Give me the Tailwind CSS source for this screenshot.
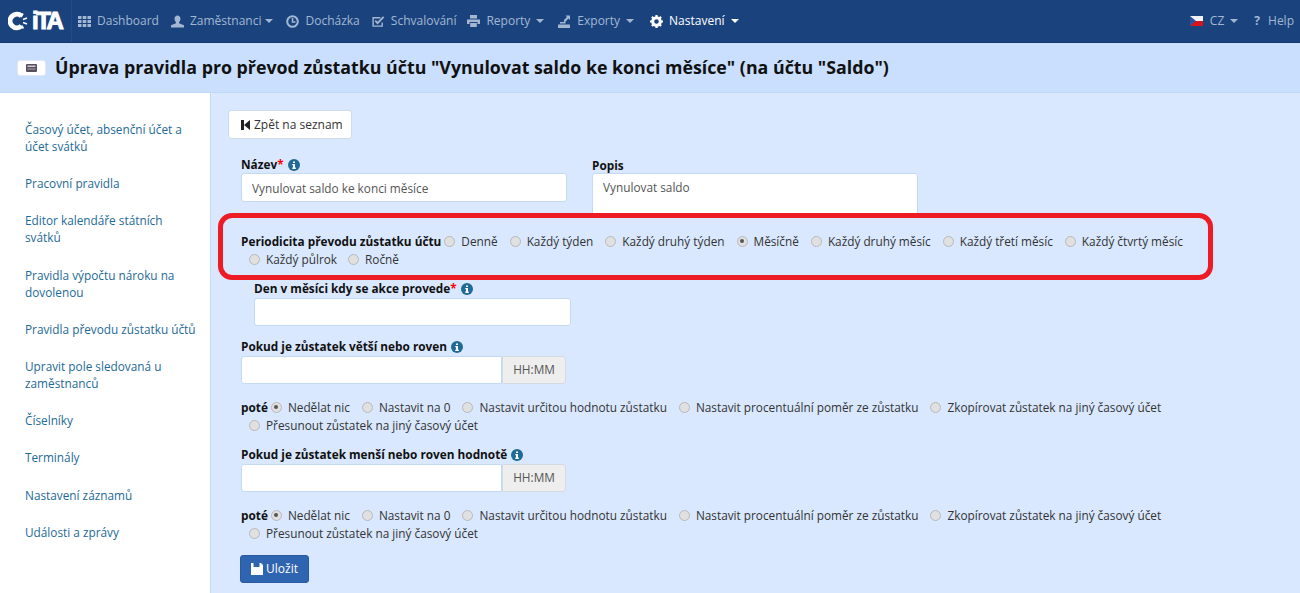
<!DOCTYPE html>
<html lang="cs">
<head>
    <meta charset="UTF-8">
    <title>Úprava pravidla</title>
    <script src="https://cdn.jsdelivr.net/npm/@tailwindcss/browser@4"></script>
</head>
<body class="h-[593px] overflow-hidden bg-[#d9e8fe] font-['Open_Sans',sans-serif] text-[11.800px] text-[#333]">
    <!-- Top nav -->
    <nav class="h-[43px] bg-[#1a437e] border-b border-[#15396c] flex items-center text-[12px] text-[#a3b7d2]">
        <div class="w-[72px] h-full border-r border-[#234d8a] flex items-center pl-[8px] shrink-0">
            <svg width="20" height="20" viewBox="0 0 20 20" class="mr-[4px]">
                <path d="M13.500 5A6.800 6.800 0 1 0 13.500 15" fill="none" stroke="#fff" stroke-width="5"/>
                <path d="M10 5V1M13 6l2-3.500M15 8.500l4-1.500M15 11.500l4 1.500M13.500 14.500l2 3" stroke="#fff" stroke-width="1.600"/>
            </svg>
            <span class="font-['Liberation_Sans',sans-serif] font-bold text-white text-[24px] leading-none tracking-[-2.500px] [-webkit-text-stroke:1px_white]">iTA</span>
        </div>
        <div class="flex items-center pl-[6px] gap-[12px]">
            <a class="flex items-center gap-[6px]">
                <svg width="13" height="11" viewBox="0 0 13 11" fill="currentColor"><path d="M0 0h3.500v3H0zM4.700 0h3.600v3H4.700zM9.500 0H13v3H9.500zM0 4h3.500v3H0zM4.700 4h3.600v3H4.700zM9.500 4H13v3H9.500zM0 8h3.500v3H0zM4.700 8h3.600v3H4.700zM9.500 8H13v3H9.500z"/></svg>
                Dashboard
            </a>
            <a class="flex items-center gap-[6px]">
                <svg width="13" height="13" viewBox="0 0 14 13" fill="currentColor"><path d="M7 0c2 0 3.200 1.500 3.200 3.500 0 1.500-.7 2.800-1.500 3.500v1.300L14 10.500V13H0v-2.500l5.300-2.200V7C4.500 6.300 3.800 5 3.800 3.500 3.800 1.500 5 0 7 0z"/></svg>
                <span>Zaměstnanci</span>
                <span class="w-0 h-0 border-x-[4px] border-x-transparent border-t-[4px] border-t-current -ml-[2px]"></span>
            </a>
            <a class="flex items-center gap-[6px] ml-[1px]">
                <svg width="13" height="13" viewBox="0 0 13 13" fill="none" stroke="currentColor"><circle cx="6.500" cy="6.500" r="5.300" stroke-width="2"/><path d="M6.500 3v4H9.500" stroke-width="1.500"/></svg>
                Docházka
            </a>
            <a class="flex items-center gap-[6px]">
                <svg width="13" height="13" viewBox="0 0 14 13" fill="none" stroke="currentColor"><path d="M11 7.500V11.500H1.200V2.500H9" stroke-width="1.500"/><path d="M3.500 5.500l2.500 2.800L12.500 1.500" stroke-width="2"/></svg>
                Schvalování
            </a>
            <a class="flex items-center gap-[6px] -ml-[1px]">
                <svg width="13" height="12" viewBox="0 0 13 12" fill="currentColor"><path d="M3 0h7v3.500H3zM0 4.500h13V9h-2.500V7h-8v2H0zM3.200 8h6.600v4H3.200z"/></svg>
                <span>Reporty</span>
                <span class="w-0 h-0 border-x-[4px] border-x-transparent border-t-[4px] border-t-current"></span>
            </a>
            <a class="flex items-center gap-[6px] ml-[1px]">
                <svg width="14" height="13" viewBox="0 0 14 13" fill="currentColor"><path d="M1 9.500h12V13H1zM3 7h4V5L10 2 8.500.5H13v4.500L11.500 3.500 8.500 6.500V8.500H3z"/></svg>
                <span>Exporty</span>
                <span class="w-0 h-0 border-x-[4px] border-x-transparent border-t-[4px] border-t-current"></span>
            </a>
            <a class="flex items-center gap-[6px] ml-[4px] text-white">
                <svg width="13" height="13" viewBox="0 0 13 13"><circle cx="6.500" cy="6.500" r="3.800" fill="none" stroke="currentColor" stroke-width="3"/><path d="M6.500 0v13M0 6.500h13M1.900 1.900l9.200 9.200M11.100 1.900l-9.200 9.200" stroke="currentColor" stroke-width="2.200" stroke-dasharray="2.400 8.200 2.400"/></svg>
                <span>Nastavení</span>
                <span class="w-0 h-0 border-x-[4px] border-x-transparent border-t-[4px] border-t-current"></span>
            </a>
        </div>
        <div class="ml-auto flex items-center pr-[6px]">
            <svg width="13" height="10" viewBox="0 0 13 10"><rect width="13" height="5" fill="#f2f2f5"/><rect y="5" width="13" height="5" fill="#d7141a"/><path d="M0 0l6 5-6 5z" fill="#2d4f9e"/></svg>
            <span class="ml-[7px]">CZ</span>
            <span class="ml-[6px] w-0 h-0 border-x-[4px] border-x-transparent border-t-[4px] border-t-current"></span>
            <span class="ml-[16px] font-bold">?</span>
            <span class="ml-[8px]">Help</span>
        </div>
    </nav>

    <!-- Title bar -->
    <header class="h-[50px] bg-[#c9dffd] flex items-center pl-[17px] border-b border-[#c1d8f8]">
        <div class="w-[29px] h-[16px] bg-white rounded-[3px] border border-[#e4e9f2] flex items-center justify-center">
            <svg width="11" height="8" viewBox="0 0 11 8"><rect width="11" height="8" rx="1" fill="#5a4f5c"/><rect x="1.500" y="1.500" width="8" height="1.500" fill="#cfcfd6"/><rect x="1.500" y="4.500" width="8" height="1" fill="#a9a5ad"/></svg>
        </div>
        <h1 class="ml-[9px] text-[17.800px] font-bold text-[#111]">Úprava pravidla pro převod zůstatku účtu "Vynulovat saldo ke konci měsíce" (na účtu "Saldo")</h1>
    </header>

    <div class="flex h-[501px]">
        <!-- Sidebar -->
        <aside class="w-[211px] shrink-0 bg-white border-r border-[#c4d9f6] pl-[25px] pr-[13px] pt-[28px] flex flex-col gap-[20.200px] text-[#1d6a96] leading-[17px]">
            <a>Časový účet, absenční účet a účet svátků</a>
            <a>Pracovní pravidla</a>
            <a>Editor kalendáře státních svátků</a>
            <a>Pravidla výpočtu nároku na dovolenou</a>
            <a>Pravidla převodu zůstatku účtů</a>
            <a>Upravit pole sledovaná u zaměstnanců</a>
            <a>Číselníky</a>
            <a>Terminály</a>
            <a>Nastavení záznamů</a>
            <a>Události a zprávy</a>
        </aside>

        <!-- Form -->
        <main class="relative flex-1 pl-[17px] pt-[17px]">
            <button class="h-[29px] w-[124px] bg-white border border-[#cfdbeb] rounded-[3px] flex items-center pl-[12px] gap-[4px] text-[12px] text-[#333]">
                <svg width="9" height="10" viewBox="0 0 9 10" fill="#222"><path d="M0 0h3v10H0zM9 0v10L3 5z"/></svg>
                Zpět na seznam
            </button>

            <div class="ml-[13px] mt-[18px] flex gap-[25px] h-[58px]">
                <div>
                    <label class="flex items-center h-[16px] font-bold text-[#111]">Název<span class="text-[#f00]">*</span>
                        <svg class="ml-[4px]" width="12" height="12" viewBox="0 0 12 12"><circle cx="6" cy="6" r="6" fill="#1f6a96"/><path d="M5 2.500h2v1.500H5zM4.300 5h2.700v3.500h.8V10H4.300V8.500H5V6.300h-.7z" fill="#fff"/></svg>
                    </label>
                    <input value="Vynulovat saldo ke konci měsíce" class="block w-[326px] h-[29px] bg-white border border-[#c4d9f6] rounded-[3px] px-[10px] text-[#555]">
                </div>
                <div>
                    <label class="block h-[16px] font-bold text-[#111]">Popis</label>
                    <div class="w-[326px] h-[42px] bg-white border border-[#c4d9f6] rounded-[3px] px-[10px] py-[5px] text-[#555]">Vynulovat saldo</div>
                </div>
            </div>

            <!-- Periodicita -->
            <div class="ml-[13px] mt-[17px] flex flex-wrap items-center leading-[18px] pr-[20px]">
                <span class="font-bold text-[#111] mr-[-5px]">Periodicita převodu zůstatku účtu</span>
                <label class="flex items-center gap-[6px] ml-[8px] mr-[4px]"><span class="w-[11px] h-[11px] rounded-full bg-[#e0e0e0] border border-[#b9b9b9]"></span>Denně</label>
                <label class="flex items-center gap-[6px] ml-[8px] mr-[4px]"><span class="w-[11px] h-[11px] rounded-full bg-[#e0e0e0] border border-[#b9b9b9]"></span>Každý týden</label>
                <label class="flex items-center gap-[6px] ml-[8px] mr-[4px]"><span class="w-[11px] h-[11px] rounded-full bg-[#e0e0e0] border border-[#b9b9b9]"></span>Každý druhý týden</label>
                <label class="flex items-center gap-[6px] ml-[8px] mr-[4px]"><span class="w-[11px] h-[11px] rounded-full bg-[#e0e0e0] border border-[#b9b9b9] flex items-center justify-center"><span class="w-[4px] h-[4px] rounded-full bg-[#555]"></span></span>Měsíčně</label>
                <label class="flex items-center gap-[6px] ml-[8px] mr-[4px]"><span class="w-[11px] h-[11px] rounded-full bg-[#e0e0e0] border border-[#b9b9b9]"></span>Každý druhý měsíc</label>
                <label class="flex items-center gap-[6px] ml-[8px] mr-[4px]"><span class="w-[11px] h-[11px] rounded-full bg-[#e0e0e0] border border-[#b9b9b9]"></span>Každý třetí měsíc</label>
                <label class="flex items-center gap-[6px] ml-[8px] mr-[4px]"><span class="w-[11px] h-[11px] rounded-full bg-[#e0e0e0] border border-[#b9b9b9]"></span>Každý čtvrtý měsíc</label>
                <label class="flex items-center gap-[6px] ml-[8px] mr-[4px] basis-full"><span class="w-[11px] h-[11px] rounded-full bg-[#e0e0e0] border border-[#b9b9b9]"></span>Každý půlrok<span class="ml-[5px] w-[11px] h-[11px] rounded-full bg-[#e0e0e0] border border-[#b9b9b9]"></span>Ročně</label>
            </div>

            <!-- Den -->
            <div class="ml-[26px] mt-[12px]">
                <label class="flex items-center h-[17px] font-bold text-[#111]">Den v měsíci kdy se akce provede<span class="text-[#f00]">*</span>
                    <svg class="ml-[4px]" width="12" height="12" viewBox="0 0 12 12"><circle cx="6" cy="6" r="6" fill="#1f6a96"/><path d="M5 2.500h2v1.500H5zM4.300 5h2.700v3.500h.8V10H4.300V8.500H5V6.300h-.7z" fill="#fff"/></svg>
                </label>
                <input class="block mt-[1px] w-[317px] h-[28px] bg-white border border-[#c4d9f6] rounded-[3px]">
            </div>

            <!-- Větší -->
            <div class="ml-[13px] mt-[12px]">
                <label class="flex items-center h-[17px] font-bold text-[#111]">Pokud je zůstatek větší nebo roven
                    <svg class="ml-[4px]" width="12" height="12" viewBox="0 0 12 12"><circle cx="6" cy="6" r="6" fill="#1f6a96"/><path d="M5 2.500h2v1.500H5zM4.300 5h2.700v3.500h.8V10H4.300V8.500H5V6.300h-.7z" fill="#fff"/></svg>
                </label>
                <div class="flex mt-[1px]">
                    <input class="w-[261px] h-[28px] bg-white border border-[#c4d9f6] rounded-l-[3px]">
                    <span class="w-[64px] h-[28px] bg-[#eee] border border-[#d5dbe3] rounded-r-[3px] flex items-center justify-center text-[#555]">HH:MM</span>
                </div>
            </div>
            <div class="ml-[13px] mt-[14px] flex flex-wrap items-center leading-[18px] pr-[20px]">
                <span class="font-bold text-[#111] mr-[-5px]">poté</span>
                <label class="flex items-center gap-[6px] ml-[8px] mr-[4px]"><span class="w-[11px] h-[11px] rounded-full bg-[#e0e0e0] border border-[#b9b9b9] flex items-center justify-center"><span class="w-[4px] h-[4px] rounded-full bg-[#555]"></span></span>Nedělat nic</label>
                <label class="flex items-center gap-[6px] ml-[8px] mr-[4px]"><span class="w-[11px] h-[11px] rounded-full bg-[#e0e0e0] border border-[#b9b9b9]"></span>Nastavit na 0</label>
                <label class="flex items-center gap-[6px] ml-[8px] mr-[4px]"><span class="w-[11px] h-[11px] rounded-full bg-[#e0e0e0] border border-[#b9b9b9]"></span>Nastavit určitou hodnotu zůstatku</label>
                <label class="flex items-center gap-[6px] ml-[8px] mr-[4px]"><span class="w-[11px] h-[11px] rounded-full bg-[#e0e0e0] border border-[#b9b9b9]"></span>Nastavit procentuální poměr ze zůstatku</label>
                <label class="flex items-center gap-[6px] ml-[8px] mr-[4px]"><span class="w-[11px] h-[11px] rounded-full bg-[#e0e0e0] border border-[#b9b9b9]"></span>Zkopírovat zůstatek na jiný časový účet</label>
                <label class="flex items-center gap-[6px] ml-[8px] mr-[4px] basis-full"><span class="w-[11px] h-[11px] rounded-full bg-[#e0e0e0] border border-[#b9b9b9]"></span>Přesunout zůstatek na jiný časový účet</label>
            </div>

            <!-- Menší -->
            <div class="ml-[13px] mt-[12px]">
                <label class="flex items-center h-[17px] font-bold text-[#111]">Pokud je zůstatek menší nebo roven hodnotě
                    <svg class="ml-[4px]" width="12" height="12" viewBox="0 0 12 12"><circle cx="6" cy="6" r="6" fill="#1f6a96"/><path d="M5 2.500h2v1.500H5zM4.300 5h2.700v3.500h.8V10H4.300V8.500H5V6.300h-.7z" fill="#fff"/></svg>
                </label>
                <div class="flex mt-[1px]">
                    <input class="w-[261px] h-[28px] bg-white border border-[#c4d9f6] rounded-l-[3px]">
                    <span class="w-[64px] h-[28px] bg-[#eee] border border-[#d5dbe3] rounded-r-[3px] flex items-center justify-center text-[#555]">HH:MM</span>
                </div>
            </div>
            <div class="ml-[13px] mt-[14px] flex flex-wrap items-center leading-[18px] pr-[20px]">
                <span class="font-bold text-[#111] mr-[-5px]">poté</span>
                <label class="flex items-center gap-[6px] ml-[8px] mr-[4px]"><span class="w-[11px] h-[11px] rounded-full bg-[#e0e0e0] border border-[#b9b9b9] flex items-center justify-center"><span class="w-[4px] h-[4px] rounded-full bg-[#555]"></span></span>Nedělat nic</label>
                <label class="flex items-center gap-[6px] ml-[8px] mr-[4px]"><span class="w-[11px] h-[11px] rounded-full bg-[#e0e0e0] border border-[#b9b9b9]"></span>Nastavit na 0</label>
                <label class="flex items-center gap-[6px] ml-[8px] mr-[4px]"><span class="w-[11px] h-[11px] rounded-full bg-[#e0e0e0] border border-[#b9b9b9]"></span>Nastavit určitou hodnotu zůstatku</label>
                <label class="flex items-center gap-[6px] ml-[8px] mr-[4px]"><span class="w-[11px] h-[11px] rounded-full bg-[#e0e0e0] border border-[#b9b9b9]"></span>Nastavit procentuální poměr ze zůstatku</label>
                <label class="flex items-center gap-[6px] ml-[8px] mr-[4px]"><span class="w-[11px] h-[11px] rounded-full bg-[#e0e0e0] border border-[#b9b9b9]"></span>Zkopírovat zůstatek na jiný časový účet</label>
                <label class="flex items-center gap-[6px] ml-[8px] mr-[4px] basis-full"><span class="w-[11px] h-[11px] rounded-full bg-[#e0e0e0] border border-[#b9b9b9]"></span>Přesunout zůstatek na jiný časový účet</label>
            </div>

            <button class="ml-[12px] mt-[13px] w-[69px] h-[28px] bg-[#2f64b1] border border-[#2a5aa0] rounded-[3px] text-[12px] text-white flex items-center justify-center gap-[3px]">
                <svg width="12" height="12" viewBox="0 0 12 12" fill="#fff"><path d="M0 0h2.500v4h6V0H10l2 2v10H0z"/></svg>
                Uložit
            </button>

            <!-- Red highlight over the periodicity row -->
            <div class="absolute left-[7px] top-[120px] w-[995px] h-[67px] border-[5px] border-[#ed1c24] rounded-[14px] pointer-events-none"></div>
        </main>
    </div>
</body>
</html>
